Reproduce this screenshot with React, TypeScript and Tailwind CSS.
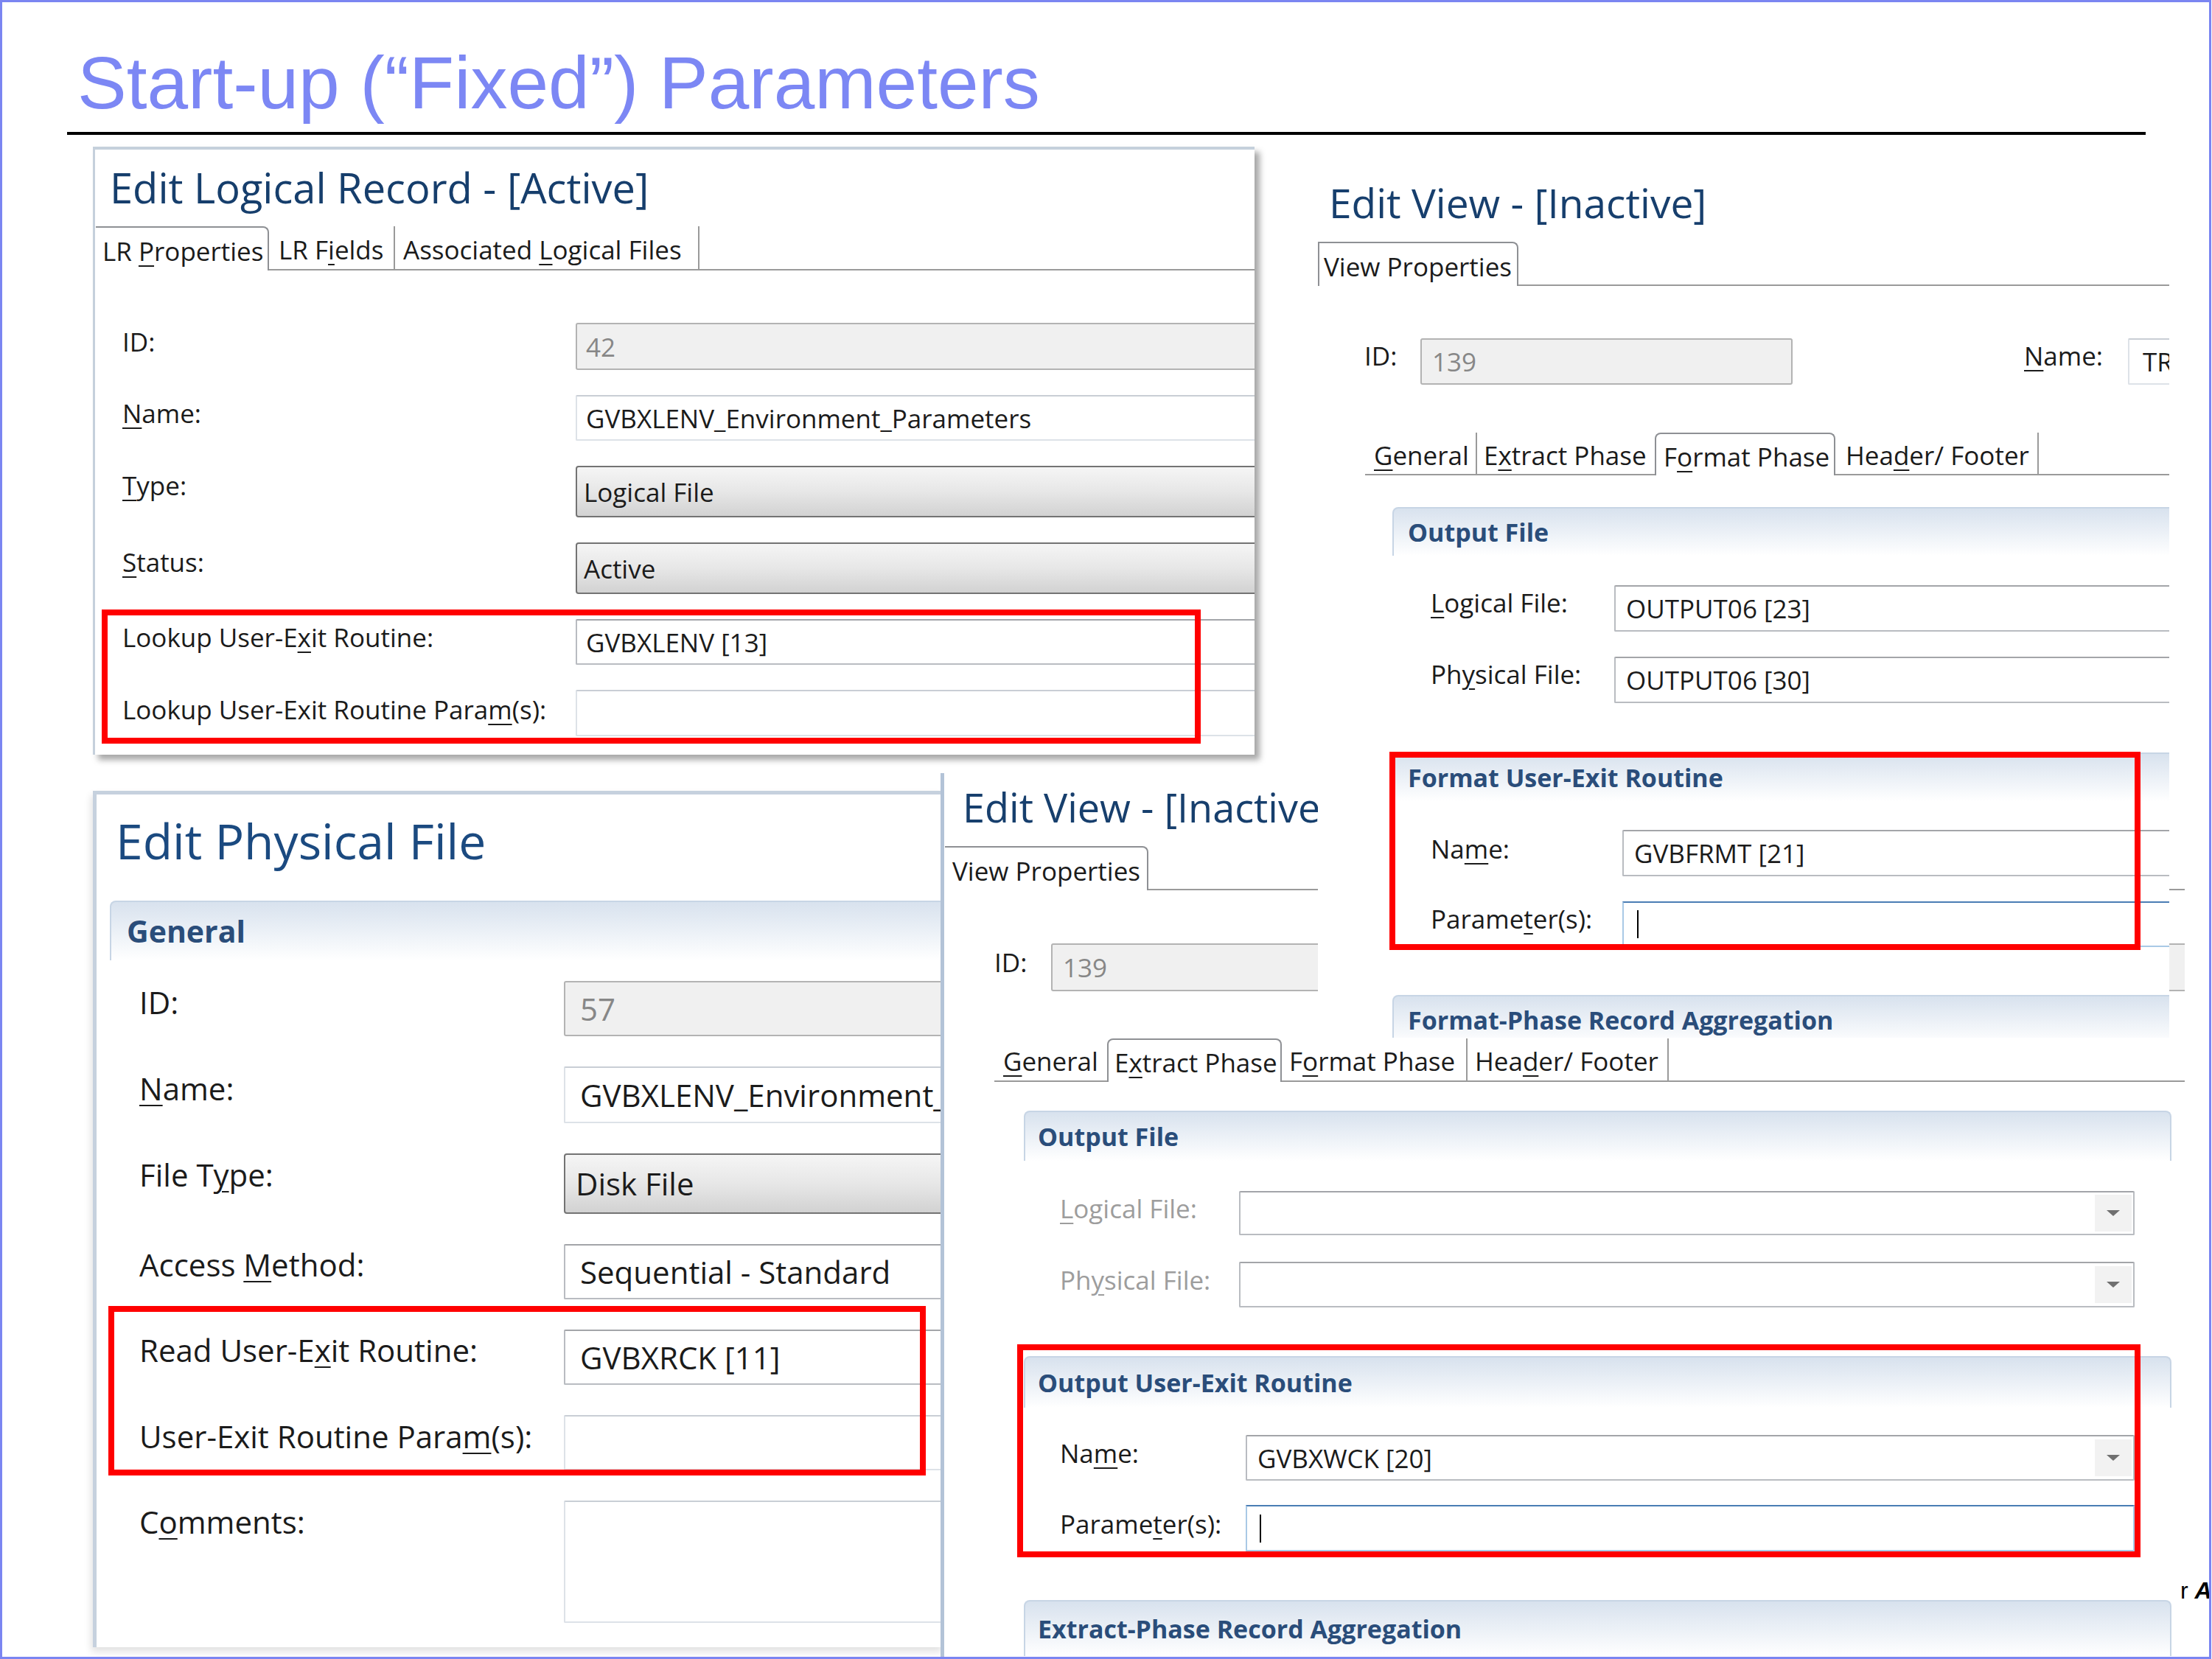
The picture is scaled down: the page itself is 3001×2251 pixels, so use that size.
import React from 'react'

const ui = "font-['Open_Sans',sans-serif]"

const textBox = 'border-2 border-[#b9bcc1] border-t-[#a3a5a9] bg-white rounded-[2px]'
const lightBox = 'border-2 border-[#dde2e8] border-t-[#c9ced5] bg-white rounded-[2px]'
const disabledBox = 'border-2 border-[#b3b3b3] bg-[#f0f0f0] text-[#878787] rounded-[3px]'
const comboBox =
  'rounded-[4px] border-2 border-[#737373] bg-linear-to-b from-[#f5f5f5] via-[#e7e7e7] to-[#d2d2d2]'
const focusBox = 'border-2 border-[#a9c9e6] border-t-[#4a7db4] bg-white'
const sectionHead =
  'flex items-center rounded-t-[8px] border-2 border-b-0 border-[#c7d5e5] bg-linear-to-b from-[#d8e2ee] to-white font-bold text-[#2a4d7a] whitespace-nowrap'
const tabBase = 'flex items-center whitespace-nowrap pt-[4px]'

function U({ children }: { children: React.ReactNode }) {
  return <span className="underline decoration-2 underline-offset-[6px]">{children}</span>
}

function Row({
  labelCls,
  label,
  boxCls,
  children,
}: {
  labelCls: string
  label: React.ReactNode
  boxCls: string
  children?: React.ReactNode
}) {
  return (
    <div className="flex items-center">
      <div className={`shrink-0 whitespace-nowrap leading-none ${labelCls}`}>{label}</div>
      <div className={`flex min-w-0 items-center whitespace-nowrap leading-none ${boxCls}`}>{children}</div>
    </div>
  )
}

function Caret() {
  return <span className="h-[38px] w-[2px] bg-black" />
}

function DropButton() {
  return (
    <div className="ml-auto mr-[2px] flex h-[50px] w-[50px] shrink-0 items-center justify-center bg-[#f2f2f2]">
      <svg width="18" height="10" viewBox="0 0 18 10">
        <path d="M0 1h18L9 9z" fill="#707070" />
      </svg>
    </div>
  )
}

function LogicalRecordPanel() {
  return (
    <div
      className={`absolute left-[126px] top-[199px] z-20 h-[825px] w-[1576px] border-l-[3px] border-t-4 border-[#c5d0dc] bg-white text-[#1b1b1b] shadow-[7px_7px_8px_rgba(0,0,0,0.35)] ${ui}`}
    >
      <div className="h-full overflow-hidden">
        <h2 className="mt-[21px] whitespace-nowrap pl-[20px] text-[56px] leading-[60px] text-[#163e6c]">
          Edit Logical Record - [Active]
        </h2>
        <div className="ml-px mt-[23px] flex h-[60px] text-[35px] leading-none">
          <div className={`${tabBase} w-[235px] rounded-tr-[8px] border-r-2 border-t-2 border-[#8e9094] pl-[9px]`}>
            <span>LR <U>P</U>roperties</span>
          </div>
          <div className={`${tabBase} w-[171px] border-b-2 border-r-2 border-[#9a9a9a] pl-[13px]`}>
            <span>LR F<U>i</U>elds</span>
          </div>
          <div className={`${tabBase} w-[413px] border-b-2 border-r-2 border-[#9a9a9a] pl-[11px]`}>
            <span>Associated <U>L</U>ogical Files</span>
          </div>
          <div className="flex-1 border-b-2 border-[#9a9a9a]" />
        </div>
        <div className="-mr-[30px] mt-[71px] flex flex-col gap-[34px] pl-[37px] text-[35px]">
          <Row labelCls="w-[615px] pb-[14px]" label="ID:" boxCls={`h-[64px] flex-1 pl-[12px] ${disabledBox}`}>
            42
          </Row>
          <Row labelCls="w-[615px] pb-[14px]" label={<><U>N</U>ame:</>} boxCls={`h-[62px] flex-1 pl-[12px] ${lightBox}`}>
            GVBXLENV_Environment_Parameters
          </Row>
          <Row labelCls="w-[615px] pb-[18px]" label={<><U>T</U>ype:</>} boxCls={`h-[70px] flex-1 pl-[9px] ${comboBox}`}>
            Logical File
          </Row>
          <Row labelCls="w-[615px] pb-[18px]" label={<><U>S</U>tatus:</>} boxCls={`h-[70px] flex-1 pl-[9px] ${comboBox}`}>
            Active
          </Row>
          <Row
            labelCls="w-[615px] pb-[14px]"
            label={<>Lookup User-E<U>x</U>it Routine:</>}
            boxCls={`h-[62px] flex-1 pl-[12px] ${textBox}`}
          >
            GVBXLENV [13]
          </Row>
          <Row
            labelCls="w-[615px] pb-[10px]"
            label={<>Lookup User-Exit Routine Para<U>m</U>(s):</>}
            boxCls={`h-[63px] flex-1 ${lightBox}`}
          />
        </div>
      </div>
      <div className="absolute left-[9px] top-[624px] h-[182px] w-[1491px] border-[8px] border-[#ff0000]" />
    </div>
  )
}

function FormatViewPanel() {
  return (
    <div className={`absolute left-[1788px] top-[200px] z-20 h-[1208px] w-[1155px] overflow-hidden bg-white text-[#1b1b1b] ${ui}`}>
      <h2 className="mt-[45px] whitespace-nowrap pl-[15px] text-[55px] leading-[60px] text-[#173f6d]">
        Edit View - [Inactive]
      </h2>
      <div className="mt-[23px] flex h-[60px] text-[35px] leading-none">
        <div className={`${tabBase} w-[272px] rounded-tr-[8px] border-x-2 border-t-2 border-[#8e9094] pl-[6px]`}>
          <span>View Properties</span>
        </div>
        <div className="flex-1 border-b-2 border-[#9a9a9a]" />
      </div>
      <div className="mt-[71px] flex h-[63px] items-center pl-[63px] text-[35px] leading-none">
        <div className="w-[76px] shrink-0 pb-[16px]">ID:</div>
        <div className={`flex h-full w-[505px] shrink-0 items-center pl-[14px] ${disabledBox}`}>139</div>
        <div className="ml-[314px] w-[141px] shrink-0 pb-[16px]">
          <U>N</U>ame:
        </div>
        <div className={`-mr-[30px] flex h-full flex-1 items-center pl-[18px] ${lightBox}`}>TR</div>
      </div>
      <div className="mt-[65px] flex h-[58px] pl-[64px] text-[35px] leading-none">
        <div className={`${tabBase} w-[152px] border-b-2 border-r-2 border-[#9a9a9a] pl-[12px]`}>
          <span><U>G</U>eneral</span>
        </div>
        <div className={`${tabBase} w-[241px] border-b-2 border-[#9a9a9a] pl-[9px]`}>
          <span>E<U>x</U>tract Phase</span>
        </div>
        <div className={`${tabBase} w-[245px] rounded-t-[8px] border-x-2 border-t-2 border-[#8e9094] pl-[10px]`}>
          <span>F<U>o</U>rmat Phase</span>
        </div>
        <div className={`${tabBase} w-[276px] border-b-2 border-r-2 border-[#9a9a9a] pl-[14px]`}>
          <span>Hea<U>d</U>er/ Footer</span>
        </div>
        <div className="flex-1 border-b-2 border-[#9a9a9a]" />
      </div>
      <div className={`-mr-[20px] ml-[101px] mt-[43px] h-[66px] pl-[19px] text-[34px] ${sectionHead}`}>Output File</div>
      <div className="-mr-[30px] mt-[40px] flex flex-col gap-[34px] pl-[153px] text-[35px]">
        <Row labelCls="w-[249px] pb-[16px]" label={<><U>L</U>ogical File:</>} boxCls={`h-[63px] flex-1 pl-[14px] ${textBox}`}>
          OUTPUT06 [23]
        </Row>
        <Row labelCls="w-[249px] pb-[16px]" label={<>Ph<U>y</U>sical File:</>} boxCls={`h-[63px] flex-1 pl-[14px] ${textBox}`}>
          OUTPUT06 [30]
        </Row>
      </div>
      <div className={`-mr-[20px] ml-[101px] mt-[67px] h-[66px] pl-[19px] text-[34px] ${sectionHead}`}>
        Format User-Exit Routine
      </div>
      <div className="-mr-[30px] mt-[39px] flex flex-col gap-[34px] pl-[153px] text-[35px]">
        <Row labelCls="w-[260px] pb-[12px]" label={<>Na<U>m</U>e:</>} boxCls={`h-[63px] flex-1 pl-[14px] ${textBox}`}>
          GVBFRMT [21]
        </Row>
        <Row labelCls="w-[260px] pb-[16px]" label={<>Parame<U>t</U>er(s):</>} boxCls={`h-[62px] flex-1 pl-[18px] ${focusBox}`}>
          <Caret />
        </Row>
      </div>
      <div className={`-mr-[20px] ml-[101px] mt-[65px] h-[66px] pl-[19px] text-[34px] ${sectionHead}`}>
        Format-Phase Record Aggregation
      </div>
      <div className="absolute left-[97px] top-[820px] h-[269px] w-[1019px] border-[8px] border-[#ff0000]" />
    </div>
  )
}

function PhysicalFilePanel() {
  return (
    <div
      className={`absolute left-[126px] top-[1073px] z-0 h-[1162px] w-[1155px] overflow-hidden border-l-[5px] border-t-[5px] border-[#c6d1de] bg-white text-[#1b1b1b] shadow-[-2px_6px_10px_rgba(0,0,0,0.12)] ${ui}`}
    >
      <h2 className="mt-[27px] whitespace-nowrap pl-[26px] text-[66px] leading-[70px] text-[#1b4a80]">Edit Physical File</h2>
      <div className={`-mr-[20px] ml-[18px] mt-[47px] h-[81px] pl-[21px] text-[41px] ${sectionHead}`}>General</div>
      <div className="-mr-[30px] mt-[28px] flex flex-col gap-[41px] pl-[58px] text-[42px]">
        <Row labelCls="w-[576px] pb-[18px]" label="ID:" boxCls={`h-[75px] flex-1 pl-[20px] ${disabledBox}`}>
          57
        </Row>
        <Row labelCls="w-[576px] pb-[18px]" label={<><U>N</U>ame:</>} boxCls={`h-[77px] flex-1 pl-[20px] ${lightBox}`}>
          GVBXLENV_Environment_Parameters
        </Row>
        <Row labelCls="w-[576px] pb-[24px]" label={<>File T<U>y</U>pe:</>} boxCls={`h-[82px] flex-1 pl-[14px] ${comboBox}`}>
          Disk File
        </Row>
        <Row labelCls="w-[576px] pb-[20px]" label={<>Access <U>M</U>ethod:</>} boxCls={`h-[75px] flex-1 pl-[20px] ${textBox}`}>
          Sequential - Standard
        </Row>
        <Row labelCls="w-[576px] pb-[20px]" label={<>Read User-E<U>x</U>it Routine:</>} boxCls={`h-[75px] flex-1 pl-[20px] ${textBox}`}>
          GVBXRCK [11]
        </Row>
        <Row labelCls="w-[576px] pb-[18px]" label={<>User-Exit Routine Para<U>m</U>(s):</>} boxCls={`h-[75px] flex-1 ${lightBox}`} />
        <div className="flex items-start">
          <div className="w-[576px] shrink-0 pt-[8px] leading-none">
            C<U>o</U>mments:
          </div>
          <div className={`h-[166px] flex-1 ${lightBox}`} />
        </div>
      </div>
      <div className="absolute left-[16px] top-[694px] h-[230px] w-[1109px] border-[8px] border-[#ff0000]" />
    </div>
  )
}

function ExtractViewPanel() {
  return (
    <div
      className={`absolute left-[1276px] top-[1049px] z-10 h-[1199px] w-[1688px] overflow-hidden border-l-[5px] border-[#b3c3d7] bg-white text-[#1b1b1b] ${ui}`}
    >
      <h2 className="mt-[16px] whitespace-nowrap pl-[25px] text-[54px] leading-[60px] text-[#173f6d]">
        Edit View - [Inactive]
      </h2>
      <div className="ml-px mt-[23px] flex h-[60px] text-[35px] leading-none">
        <div className={`${tabBase} w-[276px] rounded-tr-[8px] border-r-2 border-t-2 border-[#8e9094] pl-[10px]`}>
          <span>View Properties</span>
        </div>
        <div className="flex-1 border-b-2 border-[#9a9a9a]" />
      </div>
      <div className="-mr-[20px] mt-[72px] flex h-[65px] items-center pl-[68px] text-[35px] leading-none">
        <div className="w-[77px] shrink-0 pb-[14px]">ID:</div>
        <div className={`flex h-full flex-1 items-center pl-[14px] ${disabledBox}`}>139</div>
      </div>
      <div className="mt-[64px] flex h-[59px] pl-[68px] text-[35px] leading-none">
        <div className={`${tabBase} w-[153px] border-b-2 border-[#9a9a9a] pl-[12px]`}>
          <span><U>G</U>eneral</span>
        </div>
        <div className={`${tabBase} w-[237px] rounded-t-[8px] border-x-2 border-t-2 border-[#8e9094] pl-[8px]`}>
          <span>E<U>x</U>tract Phase</span>
        </div>
        <div className={`${tabBase} w-[252px] border-b-2 border-r-2 border-[#9a9a9a] pl-[10px]`}>
          <span>F<U>o</U>rmat Phase</span>
        </div>
        <div className={`${tabBase} w-[273px] border-b-2 border-r-2 border-[#9a9a9a] pl-[10px]`}>
          <span>Hea<U>d</U>er/ Footer</span>
        </div>
        <div className="flex-1 border-b-2 border-[#9a9a9a]" />
      </div>
      <div className={`ml-[108px] mt-[39px] h-[68px] w-[1557px] pl-[17px] text-[34px] ${sectionHead}`}>Output File</div>
      <div className="mt-[41px] flex flex-col gap-[36px] pl-[157px] text-[35px]">
        <Row
          labelCls="w-[243px] pb-[14px] text-[#9d9d9d]"
          label={<><U>L</U>ogical File:</>}
          boxCls={`h-[60px] w-[1215px] ${textBox}`}
        >
          <DropButton />
        </Row>
        <Row
          labelCls="w-[243px] pb-[14px] text-[#9d9d9d]"
          label={<>Ph<U>y</U>sical File:</>}
          boxCls={`h-[62px] w-[1215px] ${textBox}`}
        >
          <DropButton />
        </Row>
      </div>
      <div className={`ml-[108px] mt-[66px] h-[70px] w-[1557px] pl-[17px] text-[34px] ${sectionHead}`}>
        Output User-Exit Routine
      </div>
      <div className="mt-[37px] flex flex-col gap-[33px] pl-[157px] text-[35px]">
        <Row labelCls="w-[252px] pb-[14px]" label={<>Na<U>m</U>e:</>} boxCls={`h-[62px] w-[1206px] pl-[14px] ${textBox}`}>
          GVBXWCK [20]
          <DropButton />
        </Row>
        <Row labelCls="w-[252px] pb-[12px]" label={<>Parame<U>t</U>er(s):</>} boxCls={`h-[63px] w-[1206px] pl-[17px] ${focusBox}`}>
          <Caret />
        </Row>
      </div>
      <div className={`ml-[108px] mt-[66px] h-[76px] w-[1557px] pl-[17px] text-[34px] ${sectionHead}`}>
        Extract-Phase Record Aggregation
      </div>
      <div className="absolute left-[99px] top-[775px] h-[289px] w-[1524px] border-[8px] border-[#ff0000]" />
    </div>
  )
}

export default function App() {
  return (
    <div className="relative h-[2251px] w-[3001px] overflow-hidden bg-white">
      <h1 className="whitespace-nowrap pl-[105px] pt-[62px] font-['Liberation_Sans',Arial,sans-serif] text-[100px] leading-none text-[#7c87f4]">
        Start-up (“Fixed”) Parameters
      </h1>
      <div className="ml-[91px] mt-[17px] h-[4px] w-[2820px] bg-black" />

      <PhysicalFilePanel />
      <ExtractViewPanel />
      <LogicalRecordPanel />
      <FormatViewPanel />

      <div className="absolute left-[2958px] top-[2142px] z-30 whitespace-nowrap font-['Liberation_Sans',Arial,sans-serif] text-[32px] leading-none text-black">
        r <span className="font-bold italic">A</span>
      </div>
      <div className="pointer-events-none absolute left-0 top-0 z-40 h-[2251px] w-[3000px] border-[3px] border-[#7b85f1]" />
    </div>
  )
}
